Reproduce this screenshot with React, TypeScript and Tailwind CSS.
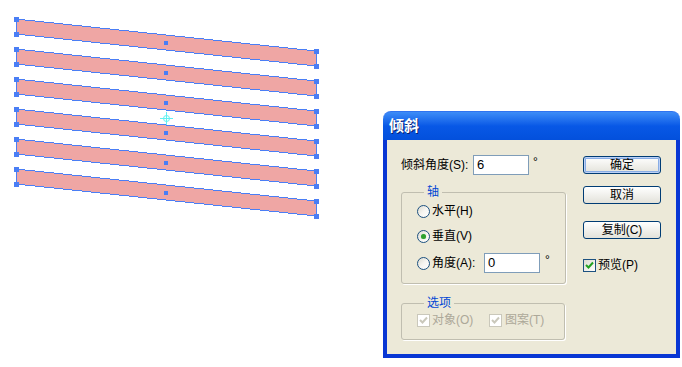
import React from "react";

const FONT = { fontFamily: '"Liberation Sans", "Noto Sans CJK SC", sans-serif' };

// stripe geometry (skewed bars on the canvas)
const STRIPES = [0, 1, 2, 3, 4, 5].map((i) => 19 + i * 30);

function Artwork() {
  return (
    <svg width={330} height={230} className="shrink-0">
      {STRIPES.map((y) => (
        <g key={y}>
          <polygon
            points={`16,${y} 316,${y + 32} 316,${y + 47} 16,${y + 15}`}
            fill="#efa6a4"
            stroke="#4a7ef5"
            strokeWidth={1}
            shapeRendering="crispEdges"
          />
          {[
            [16, y],
            [16, y + 15],
            [316, y + 32],
            [316, y + 47],
          ].map(([x, yy], i) => (
            <rect key={i} x={x - 2} y={yy - 2} width={5} height={5} fill="#4a7ef5" />
          ))}
          <rect x={164} y={y + 22} width={4} height={4} fill="#4a7ef5" />
        </g>
      ))}
      {/* reference point */}
      <g stroke="#5ff2f2" strokeWidth={1} fill="none">
        <circle cx={166.5} cy={118.5} r={3} />
        <line x1={166.5} y1={112} x2={166.5} y2={125} />
        <line x1={160} y1={118.5} x2={173} y2={118.5} />
      </g>
    </svg>
  );
}

function Radio({ checked }: { checked?: boolean }) {
  return (
    <div className="w-[13px] h-[13px] rounded-full border border-[#1c5180] bg-gradient-to-br from-[#dcdad0] via-[#f6f5f1] to-white flex items-center justify-center shrink-0">
      {checked && <div className="w-[5px] h-[5px] rounded-full bg-[#2fa02f] shadow-[0_0_1px_#7fd87f]" />}
    </div>
  );
}

function Check({ disabled }: { disabled?: boolean }) {
  return (
    <div
      className={
        "w-[13px] h-[13px] border flex items-center justify-center shrink-0 " +
        (disabled ? "border-[#cac8bb] bg-white" : "border-[#1c5180] bg-gradient-to-br from-[#dcdad0] to-white")
      }
    >
      <svg width={9} height={9} viewBox="0 0 9 9">
        <path
          d="M1 4 L3.5 6.5 L8 1.5"
          fill="none"
          stroke={disabled ? "#cac8bb" : "#21a121"}
          strokeWidth={2}
        />
      </svg>
    </div>
  );
}

function Button({ label, primary }: { label: string; primary?: boolean }) {
  return (
    <div
      className={
        "w-[78px] h-[18px] rounded-[3px] border border-[#003c74] bg-gradient-to-b from-white to-[#e3e2da] flex items-center justify-center text-[12px] text-black " +
        (primary ? "shadow-[inset_0_0_0_1px_#bdd1f6,inset_0_0_0_2px_#89ade4]" : "")
      }
    >
      {label}
    </div>
  );
}

function ShearDialog() {
  return (
    <div className="ml-[53px] mt-[111px] w-[297px] h-[247px] flex flex-col shrink-0">
      {/* title bar */}
      <div className="h-[29px] rounded-t-[8px] bg-gradient-to-b from-[#3d8cf7] via-[#0858e6] to-[#0350dc] border-t border-[#2f73f0] flex items-center pl-[6px]">
        <span className="text-white font-bold text-[15px] [text-shadow:1px_1px_0_#0a1e6e]">倾斜</span>
      </div>
      {/* body */}
      <div className="flex-1 bg-[#ece9d8] border-x-[4px] border-b-[4px] border-[#0836d4] flex pl-[14px] pt-[15px] text-[12px] text-black">
        <div className="w-[164px] flex flex-col">
          <div className="h-[20px] flex items-center">
            <span className="w-[72px]">倾斜角度(S):</span>
            <div className="w-[56px] h-[20px] border border-[#7f9db9] bg-white flex items-center pl-[3px] text-[13px]">6</div>
            <span className="ml-[4px] -mt-[6px]">°</span>
          </div>

          <fieldset className="mt-[9px] h-[100px] border border-[#c0beb0] rounded-[3px] shadow-[1px_1px_0_#fff] px-[15px]">
            <legend className="px-[3px] ml-[7px] text-[#0046d5] leading-[16px]">轴</legend>
            <div className="flex items-center gap-[2px] mt-[4px] h-[14px]">
              <Radio />
              <span>水平(H)</span>
            </div>
            <div className="flex items-center gap-[2px] mt-[11px] h-[14px]">
              <Radio checked />
              <span>垂直(V)</span>
            </div>
            <div className="flex items-center gap-[2px] mt-[10px] h-[20px]">
              <Radio />
              <span className="w-[50px]">角度(A):</span>
              <div className="w-[56px] h-[20px] border border-[#7f9db9] bg-white flex items-center pl-[3px] text-[13px]">0</div>
              <span className="ml-[3px] -mt-[6px]">°</span>
            </div>
          </fieldset>

          <fieldset className="mt-[11px] h-[45px] border border-[#c0beb0] rounded-[3px] shadow-[1px_1px_0_#fff] px-[15px] text-[#aca899]">
            <legend className="px-[3px] ml-[7px] text-[#0046d5] leading-[16px]">选项</legend>
            <div className="flex items-center mt-[2px] h-[14px]">
              <Check disabled />
              <span className="ml-[2px] w-[57px]">对象(O)</span>
              <Check disabled />
              <span className="ml-[3px]">图案(T)</span>
            </div>
          </fieldset>
        </div>

        <div className="ml-[18px] flex flex-col">
          <div className="mt-[1px]">
            <Button label="确定" primary />
          </div>
          <div className="mt-[12px]">
            <Button label="取消" />
          </div>
          <div className="mt-[17px]">
            <Button label="复制(C)" />
          </div>
          <div className="mt-[17px] flex items-center gap-[2px]">
            <Check />
            <span>预览(P)</span>
          </div>
        </div>
      </div>
    </div>
  );
}

export default function App() {
  return (
    <div className="w-[682px] h-[367px] bg-white flex items-start overflow-hidden" style={FONT}>
      <Artwork />
      <ShearDialog />
    </div>
  );
}
